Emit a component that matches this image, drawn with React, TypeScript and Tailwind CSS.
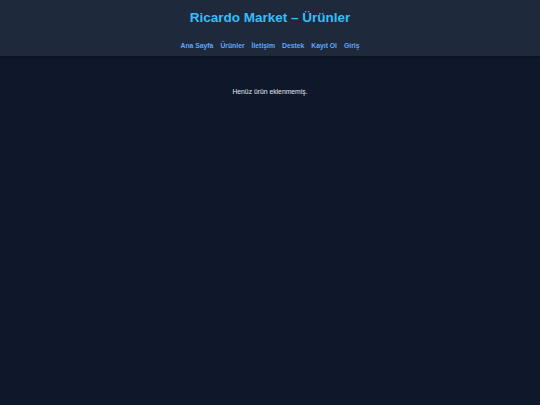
export default function App() {
  const links = ['Ana Sayfa', 'Ürünler', 'İletişim', 'Destek', 'Kayıt Ol', 'Giriş']

  return (
    <div className="min-h-[405px] bg-[#0f172a] font-['Liberation_Sans',Arial,sans-serif] text-[6.8px]">
      <header className="bg-[#1e293b] pt-[9.6px] pb-[5.5px] text-center shadow-[0_1px_3px_rgba(0,0,0,0.4)]">
        <h1 className="text-[13.5px] font-bold leading-[15.5px] text-[#38bdf8]">
          Ricardo Market – Ürünler
        </h1>
        <nav className="mt-[17px] flex justify-center gap-[7px] leading-[8px]">
          {links.map((l) => (
            <a key={l} href="#" className="font-bold text-[#60a5fa]">
              {l}
            </a>
          ))}
        </nav>
      </header>

      <main className="pt-[31px] text-center">
        <p className="text-[#e2e8f0]">Henüz ürün eklenmemiş.</p>
      </main>
    </div>
  )
}
